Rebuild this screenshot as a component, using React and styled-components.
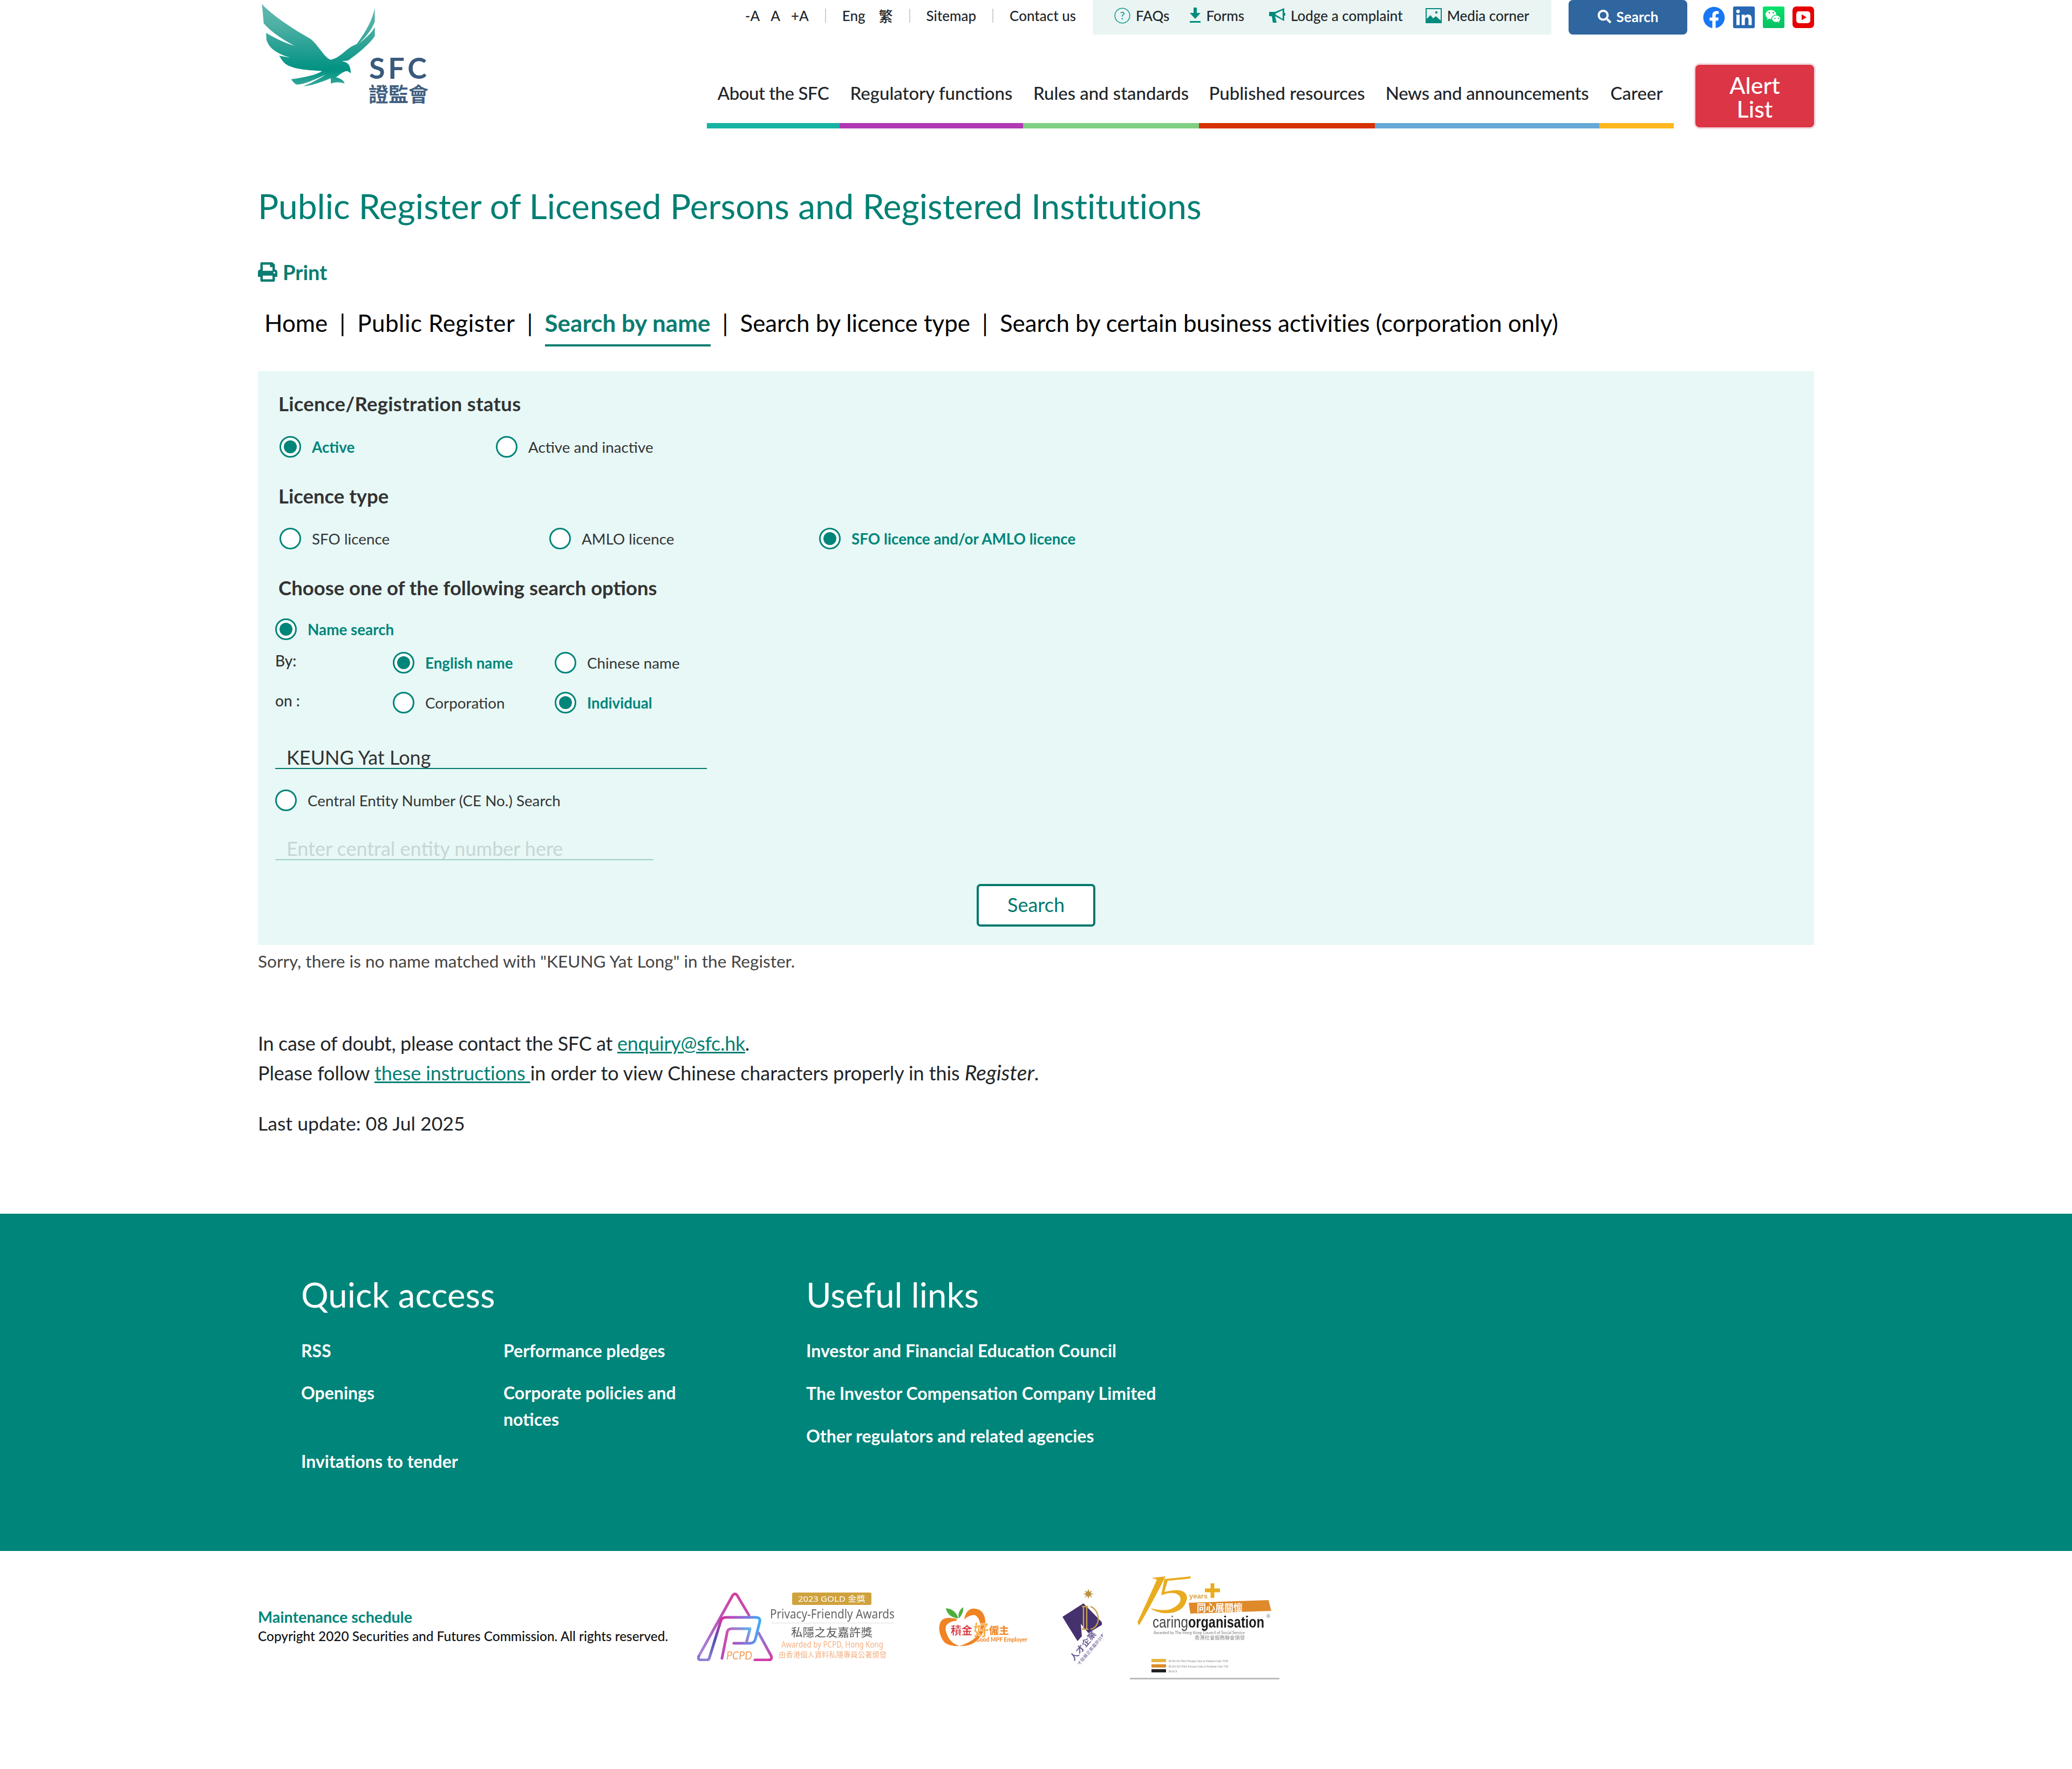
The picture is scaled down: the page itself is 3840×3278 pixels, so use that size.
import React from "react";
import styled, { createGlobalStyle } from "styled-components";
import { FaFacebook, FaLinkedin, FaPrint, FaSearch } from "react-icons/fa";

const Global = createGlobalStyle`
  html, body { margin: 0; padding: 0; background: #fff; }
  body { font-family: Lato, "Noto Sans CJK TC", sans-serif; color: #212529; }
  * { box-sizing: border-box; }
`;

const Wrap = styled.div`width: 2884px; margin: 0 auto;`;
const Header = styled.header`display: flex; justify-content: space-between; height: 238px;`;
const LogoBox = styled.a`display: block; width: 330px; height: 200px;`;
const HeadRight = styled.div`display: flex; flex-direction: column; align-items: flex-end;`;
const TopRow = styled.div`display: flex; height: 64px; align-items: flex-start;`;
const TextTools = styled.div`display: flex; align-items: center; height: 57px; font-size: 26px; font-weight: 500; color: #212529; margin-right: 31px;`;
const ToolLink = styled.a`margin-left: ${p => p.$ml || 0}px;`;
const Sep = styled.span`width: 2px; height: 26px; background: #cfcfcf; margin: 0 30px;`;
const QuickPanel = styled.div`display: flex; align-items: center; width: 850px; height: 64px; background: #eaf5f3; padding: 0 0 6px 40px; font-size: 26px; font-weight: 500;`;
const QuickLink = styled.a`display: flex; align-items: center; gap: 10px; margin-right: ${p => p.$mr || 0}px; white-space: nowrap;`;
const SearchBtn = styled.button`display: flex; align-items: center; justify-content: center; gap: 10px; width: 220px; height: 64px; margin-left: 32px; background: #2f669f; color: #fff; border: 0; border-radius: 8px; font: 700 26px Lato, sans-serif; padding: 0 0 3px;`;
const Socials = styled.div`display: flex; align-items: center; gap: 15px; margin-left: 29px; height: 64px; svg { display: block; }`;
const MainRow = styled.div`display: flex; margin-top: 54px; align-items: flex-start;`;
const Nav = styled.nav`display: flex;`;
const NavItem = styled.a`display: flex; align-items: center; justify-content: center; height: 120px; width: ${p => p.$w}px; border-bottom: 10px solid ${p => p.$c}; padding-bottom: 3px; font-size: 33px; font-weight: 500; letter-spacing: ${p => p.$ls}px; white-space: nowrap; color: #212529;`;
const AlertBtn = styled.a`display: flex; align-items: center; justify-content: center; width: 220px; height: 116px; margin: 2px 0 0 40px; padding-top: 3px; background: #dc3545; box-shadow: 0 0 0 3px #f5dade; border-radius: 8px; color: #fff; font-size: 43px; font-weight: 500; line-height: 44px; text-align: center;`;

const Title = styled.h1`margin: 104px 0 0; font-size: 64px; line-height: 80px; font-weight: 400; color: #007f73; letter-spacing: -0.03px;`;
const PrintLink = styled.a`display: flex; align-items: center; gap: 10px; margin-top: 60px; height: 44px; font-size: 38px; font-weight: 700; color: #0b7c70;`;
const Tabs = styled.div`display: flex; margin-top: 44px; padding-left: 12px; font-size: 44px; line-height: 56px; color: #000; height: 74px;`;
const Tab = styled.a`display: block; height: 72px; white-space: nowrap; letter-spacing: ${p => p.$ls || 0}px; ${p => p.$on ? "color:#0b7c70;font-weight:700;border-bottom:4px solid #0b7c70;" : ""}`;
const Bar = styled.span`display: block; margin: 0 22px;`;

const Panel = styled.section`margin-top: 44px; background: #e7f8f6; padding: 38px 32px 34px; height: 1063px;`;
const Heading = styled.h3`margin: ${p => p.$mt || 0}px 0 0 6px; font-size: 36.5px; line-height: 44px; font-weight: 700; color: #333; letter-spacing: ${p => p.$ls || 0}px;`;
const RadioRow = styled.div`display: flex; margin: ${p => p.$mt || 0}px 0 0 ${p => p.$ml ?? 8}px; height: 40px;`;
const RadioItem = styled.label`display: flex; align-items: center; width: ${p => p.$w ? p.$w + "px" : "auto"}; gap: 20px; font-size: 27.8px; font-weight: ${p => p.$on ? 700 : 400}; color: ${p => p.$on ? "#00857a" : "#333"}; white-space: nowrap;`;
const RadioDot = styled.span`display: flex; align-items: center; justify-content: center; width: 40px; height: 40px; border-radius: 50%; border: 3px solid #00857a; background: #fff; flex: none; &::after { content: ""; display: ${p => p.$on ? "block" : "none"}; width: 24px; height: 24px; border-radius: 50%; background: #00857a; }`;
const SubLabel = styled.span`display: block; width: 218px; font-size: 28px; line-height: 32px; font-weight: 500; color: #333; margin-top: ${p => p.$mt || 0}px;`;
const TextBox = styled.div`margin-top: ${p => p.$mt}px; width: ${p => p.$w}px; height: 56px; border-bottom: 2px solid ${p => p.$line}; padding: 12px 0 0 21px; font-size: 36px; line-height: 44px; font-weight: 400; color: ${p => p.$c}; white-space: nowrap;`;
const ButtonLine = styled.div`display: flex; justify-content: center; margin-top: 44px;`;
const SubmitBtn = styled.button`width: 220px; height: 79px; background: #fff; border: 4px solid #00796d; border-radius: 7px; color: #00796d; font: 400 36px Lato, sans-serif; padding: 0 0 3px;`;
const Message = styled.p`margin: 10px 0 0; font-size: 31.6px; line-height: 40px; color: #444;`;
const BodyBlock = styled.div`margin-top: 105px; font-size: 36px; line-height: 54px; color: #212529;`;
const BodyLine = styled.div`letter-spacing: ${p => p.$ls}px; white-space: nowrap;`;
const RegisterWord = styled.em`font-size: 39px; letter-spacing: 0;`;
const BodyLink = styled.a`color: #007f73; text-decoration: underline;`;
const Updated = styled.p`margin: 40px 0 140px; font-size: 35.6px; line-height: 54px;`;

const Footer = styled.footer`background: #00857a; height: 625px; color: #fff;`;
const FooterInner = styled.div`width: 2884px; margin: 0 auto; padding: 112px 0 0 80px; display: flex;`;
const FootCol = styled.div`width: ${p => p.$w}px;`;
const FootHead = styled.h2`margin: 0 0 41px; font-size: 63.5px; line-height: 76px; font-weight: 400; color: #fff;`;
const FootGrid = styled.div`display: grid; grid-template-columns: 375px 375px; row-gap: 29px; align-items: start;`;
const FootList = styled.div`display: flex; flex-direction: column; gap: 30px;`;
const FootLink = styled.a`display: block; font-size: 32px; line-height: 49px; font-weight: 700; color: #fff;`;

const Bottom = styled.div`width: 2884px; margin: 0 auto; padding: 40px 0 163px; display: flex; align-items: center;`;
const Legal = styled.div`width: 814px;`;
const LegalLink = styled.a`display: block; font-size: 28.7px; line-height: 36px; font-weight: 700; color: #00857a;`;
const Copy = styled.div`font-size: 24.4px; line-height: 36px; font-weight: 500; color: #111; white-space: nowrap;`;
const Awards = styled.div`display: flex; align-items: center; svg { display: block; filter: blur(0.7px); }`;

const Eagle = () => (
  <svg width="330" height="200" viewBox="0 0 330 200">
    <defs>
      <linearGradient id="eg" x1="0" y1="0" x2="0" y2="1">
        <stop offset="0" stopColor="#64b8af" />
        <stop offset="0.25" stopColor="#4fb0a6" />
        <stop offset="0.8" stopColor="#009282" />
        <stop offset="1" stopColor="#3aa99c" />
      </linearGradient>
    </defs>
    <g transform="translate(-18 0) scale(0.6378 0.3333)">
      <path fill="url(#eg)" d="M40 22C60 70 120 150 180 215C205 250 220 320 240 332C270 320 285 265 315 245C345 170 360 110 368 45L368 120C358 170 340 210 318 248C340 215 358 185 368 150L368 200C350 250 320 295 290 337L272 340C292 345 298 370 298 408C292 398 288 392 280 398C270 405 262 420 255 430C268 435 278 448 280 464C265 455 250 455 240 465L240 435C220 450 190 475 160 480C185 460 210 435 225 415C195 440 165 470 140 470C133 462 128 450 125 440C160 432 195 418 215 395C170 390 130 385 108 355C100 343 95 325 90 310L122 320C85 300 60 270 53 220L52 182C75 210 105 238 135 255C105 225 70 185 45 130Z" />
    </g>
    <text x="206" y="146" fill="#3a5a7c" fontFamily="Lato, sans-serif" fontWeight="700" fontSize="54" textLength="107" lengthAdjust="spacing">SFC</text>
    <text x="205" y="189" fill="#3f5f80" fontFamily="'Noto Sans CJK TC', sans-serif" fontWeight="700" fontSize="37" textLength="111" lengthAdjust="spacingAndGlyphs">證監會</text>
  </svg>
);

const QIcon = () => (
  <svg width="30" height="30" viewBox="0 0 30 30" style={{ display: "block" }}>
    <circle cx="15" cy="15" r="13.8" fill="none" stroke="#12998b" strokeWidth="1.6" />
    <text x="15" y="22" textAnchor="middle" fontSize="20" fill="#12998b" fontFamily="Lato, sans-serif">?</text>
  </svg>
);
const DownIcon = () => (
  <svg width="20" height="30" viewBox="0 0 20 30" style={{ display: "block" }}>
    <path d="M7 0h6v10h7L10 21 0 10h7z" fill="#008b7d" />
    <rect x="0" y="25" width="20" height="3" fill="#008b7d" />
  </svg>
);
const HornIcon = () => (
  <svg width="30" height="30" viewBox="0 0 30 30" style={{ display: "block" }}>
    <path d="M0 8h11L28 1v24L11 16l3 12H7L5 16H0z" fill="#008b7d" />
    <path d="M12 11l13-6v16L12 13z" fill="#eaf5f3" />
    <rect x="27" y="10" width="3" height="5" fill="#008b7d" />
  </svg>
);
const PicIcon = () => (
  <svg width="30" height="30" viewBox="0 0 30 30" style={{ display: "block" }}>
    <rect x="1" y="2" width="28" height="26" fill="#eaf5f3" stroke="#008b7d" strokeWidth="2" />
    <circle cx="20" cy="9" r="2.2" fill="#008b7d" />
    <path d="M2 27v-6l7-7 5 6 5-4 9 8v3z" fill="#008b7d" />
  </svg>
);

const Wechat = () => (
  <svg width="40" height="40" viewBox="0 0 40 40">
    <defs><linearGradient id="wc" x1="0" y1="0" x2="0" y2="1"><stop offset="0" stopColor="#05e46b" /><stop offset="1" stopColor="#07bf63" /></linearGradient></defs>
    <rect width="40" height="40" rx="3" fill="url(#wc)" />
    <g transform="translate(4 5) scale(0.052)" fill="#fff">
      <ellipse cx="210" cy="190" rx="190" ry="160" />
      <path d="M90 310l-20 70 80-40z" />
      <ellipse cx="400" cy="340" rx="160" ry="130" stroke="#07c864" strokeWidth="26" />
      <path d="M470 450l40 50-10-70z" />
    </g>
    <circle cx="12" cy="11.5" r="1.5" fill="#07c864" /><circle cx="19.5" cy="11.5" r="1.5" fill="#07c864" />
    <circle cx="22.5" cy="22" r="1.2" fill="#07c864" /><circle cx="29" cy="22" r="1.2" fill="#07c864" />
  </svg>
);
const Youtube = () => (
  <svg width="40" height="40" viewBox="0 0 40 40">
    <rect width="40" height="40" rx="7" fill="#e60000" />
    <rect x="7" y="9" width="26" height="22" rx="5" fill="#fff" />
    <path d="M17 14.5l9 5.5-9 5.5z" fill="#e60000" />
  </svg>
);

const Pcpd = () => (
  <svg width="366" height="127" viewBox="0 0 366 127">
    <defs>
      <linearGradient id="pa" x1="0" y1="0" x2="0" y2="1"><stop offset="0" stopColor="#d2409f" /><stop offset="0.55" stopColor="#b05ec0" /><stop offset="1" stopColor="#a78ade" /></linearGradient>
      <linearGradient id="pb" x1="0" y1="0" x2="0" y2="1"><stop offset="0" stopColor="#c03aa8" /><stop offset="0.5" stopColor="#4a50b2" /><stop offset="1" stopColor="#8f7fd8" /></linearGradient>
      <linearGradient id="pc" x1="0" y1="0" x2="1" y2="0"><stop offset="0" stopColor="#d62c9f" /><stop offset="0.6" stopColor="#8a70d8" /><stop offset="1" stopColor="#3fa9f5" /></linearGradient>
      <linearGradient id="pd" x1="0" y1="1" x2="1" y2="0"><stop offset="0" stopColor="#b04bc0" /><stop offset="0.5" stopColor="#d64aa8" /><stop offset="1" stopColor="#5ab2ee" /></linearGradient>
      <linearGradient id="pe" x1="0" y1="0" x2="0" y2="1"><stop offset="0" stopColor="#8a80d8" /><stop offset="1" stopColor="#d238a8" /></linearGradient>
    </defs>
    <g fill="none" strokeWidth="5" strokeLinecap="round" strokeLinejoin="round">
      <path d="M3 118L66 5Q70 0 74 5L96 42" stroke="url(#pa)" />
      <path d="M3 118Q0 125 8 125H18Q22 125 23 120L44 52" stroke="url(#pb)" />
      <path d="M44 52Q46 46 54 46H108Q118 46 116 54L108 86Q106 94 98 94H68" stroke="url(#pc)" />
      <path d="M46 122L56 72Q58 67 64 67H98L92 90" stroke="url(#pd)" />
      <path d="M114 75L137 117Q140 125 132 125H107" stroke="url(#pe)" />
    </g>
    <text x="54" y="124" fontFamily="Lato, sans-serif" fontStyle="italic" fontSize="22" fill="#f39a55" textLength="48" lengthAdjust="spacingAndGlyphs">PCPD</text>
    <rect x="176" y="0" width="147" height="23" rx="3" fill="#cfa23d" />
    <text x="187" y="17" fontFamily="'Noto Sans', 'Noto Sans CJK TC', sans-serif" fontSize="15" fill="#fff" textLength="125" lengthAdjust="spacingAndGlyphs">2023 GOLD 金獎</text>
    <text x="135" y="48" fontFamily="'Noto Sans', sans-serif" fontSize="23" fill="#666" textLength="231" lengthAdjust="spacingAndGlyphs">Privacy-Friendly Awards</text>
    <rect x="137" y="56" width="228" height="1" fill="#ddd" />
    <text x="174" y="81" fontFamily="'Noto Sans CJK TC', sans-serif" fontSize="21" fill="#555" textLength="151" lengthAdjust="spacingAndGlyphs">私隱之友嘉許獎</text>
    <text x="156" y="102" fontFamily="'Noto Sans', sans-serif" fontSize="15.5" fill="#f4b184" textLength="189" lengthAdjust="spacingAndGlyphs">Awarded by PCPD, Hong Kong</text>
    <text x="151" y="120" fontFamily="'Noto Sans CJK TC', sans-serif" fontSize="13.3" fill="#f4b184" textLength="200" lengthAdjust="spacingAndGlyphs">由香港個人資料私隱專員公署頒發</text>
  </svg>
);

const Mpf = () => (
  <svg width="165" height="72" viewBox="0 0 165 72" style={{ marginLeft: 81 }}>
    <path d="M14 2C26 3 34 10 37 21C26 20 16 14 14 2z" fill="#4caf3a" />
    <path d="M46 0C47 8 43 16 38 21C36 13 39 5 46 0z" fill="#4caf3a" />
    <path d="M34 22C22 19 10 19 5 26C-1 36 1 52 11 65C18 71 30 73 39 72C31 69 26 66 23 62C16 54 12 42 14 36C16 29 26 26 34 25z" fill="#f08323" />
    <path d="M48 23C50 12 54 5 62 3C72 2 80 6 83 12C88 20 88 32 85 42C80 54 70 66 58 70C51 72 45 72 39 72C49 69 60 64 67 58C74 50 79 42 78 34C77 25 74 18 68 15C60 14 54 18 48 23z" fill="#f08323" />
    <text x="23" y="51" fontFamily="'Noto Sans CJK TC', sans-serif" fontWeight="700" fontSize="20" fill="#d22a35" stroke="#fff" strokeWidth="0.3">積金</text>
    <text x="65" y="54" fontFamily="'Noto Sans CJK TC', sans-serif" fontWeight="700" fontSize="29" fill="#f9b04a" stroke="#fff" strokeWidth="0.5">好</text>
    <text x="94" y="50" fontFamily="'Noto Sans CJK TC', sans-serif" fontWeight="700" fontSize="18.500" fill="#f08323">僱主</text>
    <text x="69" y="64" fontFamily="Lato, sans-serif" fontWeight="700" fontSize="11" fill="#f08323" textLength="96" lengthAdjust="spacingAndGlyphs">Good MPF Employer</text>
  </svg>
);

const MdLogo = () => (
  <svg width="75" height="140" viewBox="0 0 75 140" style={{ marginLeft: 65 }}>
    <path d="M48 0l2 6 5-3-3 5 6 2-6 1 3 6-5-4-2 6-2-6-5 4 3-6-6-1 6-2-3-5 5 3z" fill="#b9913f" />
    <path d="M0 52L39 27 73 62V67L48 82 34 65 36 88 28 97 11 70z" fill="#46316f" />
    <path d="M36 33h12M36 75h12M39 33v42M45 33v42M52 33c18 6 20 38 0 42" fill="none" stroke="#c9a24e" strokeWidth="2.4" />
    <g transform="rotate(-50 40 106)" fill="#6a5a96">
      <text x="6" y="110" fontFamily="'Noto Sans CJK TC', sans-serif" fontWeight="700" fontSize="15" textLength="66" lengthAdjust="spacingAndGlyphs">人才企業</text>
      <text x="-2" y="123" fontFamily="'Noto Sans CJK TC', sans-serif" fontSize="8" textLength="84" lengthAdjust="spacingAndGlyphs">人才發展企業嘉許計劃</text>
    </g>
  </svg>
);

const Caring = () => (
  <svg width="277" height="200" viewBox="0 0 277 200" style={{ marginLeft: 50 }}>
    <path d="M40 10L66 7Q45 50 17 98L14 92Q36 45 50 13z" fill="#e9ac1f" />
    <path d="M64 12L113 7L112 11Q85 14 70 15L64 36Q105 25 106 48Q100 78 60 75Q45 72 38 66Q60 72 75 68Q98 58 93 45Q85 32 58 42z" fill="#e9ac1f" />
    <text x="110" y="48" fontFamily="'Liberation Sans', sans-serif" fontWeight="700" fontSize="13" fill="#d9a24a">years</text>
    <path d="M139 33h28M153 20v27" stroke="#e9ac1f" strokeWidth="7" />
    <path d="M109 56l148-5 5 20-150 5z" fill="#de8a2b" />
    <text x="124" y="72" fontFamily="'Noto Sans CJK TC', sans-serif" fontWeight="700" fontSize="18" fill="#fff" textLength="85" lengthAdjust="spacingAndGlyphs">同心展關懷</text>
    <text x="253" y="84" fontFamily="Lato, sans-serif" fontSize="9" fill="#777">®</text>
    <text x="42" y="102" fontFamily="'Liberation Sans', sans-serif" fontSize="29" fill="#444" textLength="66" lengthAdjust="spacingAndGlyphs">caring</text>
    <text x="108" y="102" fontFamily="'Liberation Sans', sans-serif" fontSize="29" fontWeight="700" fill="#1b1b1b" textLength="141" lengthAdjust="spacingAndGlyphs">organisation</text>
    <text x="44" y="114" fontFamily="Lato, sans-serif" fontSize="8" fill="#777" textLength="169" lengthAdjust="spacingAndGlyphs">Awarded by The Hong Kong Council of Social Service</text>
    <text x="120" y="124" fontFamily="'Noto Sans CJK TC', sans-serif" fontSize="9" fill="#888" textLength="93" lengthAdjust="spacingAndGlyphs">香港社會服務聯會頒發</text>
    <rect x="40" y="160" width="27" height="6" fill="#e5b53c" />
    <rect x="40" y="170" width="27" height="6" fill="#dd8c26" />
    <rect x="40" y="179" width="27" height="6" fill="#222" />
    <text x="72" y="166" fontFamily="Lato, sans-serif" fontSize="5" fill="#888" textLength="110" lengthAdjust="spacingAndGlyphs">BS EN ISO 9001 Process Color or Pantone Color 7578</text>
    <text x="72" y="176" fontFamily="Lato, sans-serif" fontSize="5" fill="#888" textLength="110" lengthAdjust="spacingAndGlyphs">BS EN ISO 9001 Process Color or Pantone Color 718</text>
    <text x="72" y="185" fontFamily="Lato, sans-serif" fontSize="5" fill="#888">BLACK</text>
    <rect x="0" y="195" width="277" height="3" fill="#bbb" />
  </svg>
);

const Radio = ({ on, w, children }) => (
  <RadioItem $on={on} $w={w}><RadioDot $on={on} />{children}</RadioItem>
);

const navItems = [
  ["About the SFC", 246, "#16b3a3", -0.5],
  ["Regulatory functions", 340, "#b038b2", 0],
  ["Rules and standards", 326, "#7fd083", -0.05],
  ["Published resources", 326, "#d63200", 0],
  ["News and announcements", 416, "#65a9d6", -0.33],
  ["Career", 138, "#ffb71f", 0],
];

export default function App() {
  return (
    <>
      <Global />
      <Wrap>
        <Header>
          <LogoBox><Eagle /></LogoBox>
          <HeadRight>
            <TopRow>
              <TextTools>
                <ToolLink>-A</ToolLink><ToolLink $ml={20}>A</ToolLink><ToolLink $ml={20}>+A</ToolLink>
                <Sep />
                <ToolLink>Eng</ToolLink><ToolLink $ml={25}>繁</ToolLink>
                <Sep />
                <ToolLink>Sitemap</ToolLink>
                <Sep />
                <ToolLink>Contact us</ToolLink>
              </TextTools>
              <QuickPanel>
                <QuickLink $mr={38}><QIcon />FAQs</QuickLink>
                <QuickLink $mr={46}><DownIcon />Forms</QuickLink>
                <QuickLink $mr={42}><HornIcon />Lodge a complaint</QuickLink>
                <QuickLink><PicIcon />Media corner</QuickLink>
              </QuickPanel>
              <SearchBtn><FaSearch size={25} />Search</SearchBtn>
              <Socials>
                <FaFacebook size={41} color="#1877f2" />
                <FaLinkedin size={46} color="#2867b2" style={{ margin: "0 -3px" }} />
                <Wechat />
                <Youtube />
              </Socials>
            </TopRow>
            <MainRow>
              <Nav>
                {navItems.map(([t, w, c, ls]) => <NavItem key={t} $w={w} $c={c} $ls={ls}>{t}</NavItem>)}
              </Nav>
              <AlertBtn>Alert<br />List</AlertBtn>
            </MainRow>
          </HeadRight>
        </Header>

        <Title>Public Register of Licensed Persons and Registered Institutions</Title>
        <PrintLink><FaPrint size={36} />Print</PrintLink>
        <Tabs>
          <Tab>Home</Tab><Bar>|</Bar>
          <Tab $ls={0.45}>Public Register</Tab><Bar>|</Bar>
          <Tab $on>Search by name</Tab><Bar>|</Bar>
          <Tab $ls={-0.1}>Search by licence type</Tab><Bar>|</Bar>
          <Tab $ls={-0.08}>Search by certain business activities (corporation only)</Tab>
        </Tabs>

        <Panel>
          <Heading $ls={0.27}>Licence/Registration status</Heading>
          <RadioRow $mt={38}>
            <Radio on w={401}>Active</Radio>
            <Radio>Active and inactive</Radio>
          </RadioRow>
          <Heading $mt={49}>Licence type</Heading>
          <RadioRow $mt={37}>
            <Radio w={500}>SFO licence</Radio>
            <Radio w={500}>AMLO licence</Radio>
            <Radio on>SFO licence and/or AMLO licence</Radio>
          </RadioRow>
          <Heading $mt={49}>Choose one of the following search options</Heading>
          <RadioRow $mt={35} $ml={0}><Radio on>Name search</Radio></RadioRow>
          <RadioRow $mt={22} $ml={0}>
            <SubLabel>By:</SubLabel>
            <Radio on w={300}>English name</Radio>
            <Radio>Chinese name</Radio>
          </RadioRow>
          <RadioRow $mt={34} $ml={0}>
            <SubLabel>on :</SubLabel>
            <Radio w={300}>Corporation</Radio>
            <Radio on>Individual</Radio>
          </RadioRow>
          <TextBox $mt={47} $w={800} $line="#00796d" $c="#333">KEUNG Yat Long</TextBox>
          <RadioRow $mt={38} $ml={0}><Radio>Central Entity Number (CE No.) Search</Radio></RadioRow>
          <TextBox $mt={35} $w={701} $line="#9fd0c9" $c="#c6d6d4">Enter central entity number here</TextBox>
          <ButtonLine><SubmitBtn>Search</SubmitBtn></ButtonLine>
        </Panel>

        <Message>Sorry, there is no name matched with "KEUNG Yat Long" in the Register.</Message>
        <BodyBlock>
          <BodyLine $ls={-0.33}>In case of doubt, please contact the SFC at <BodyLink>enquiry@sfc.hk</BodyLink>.</BodyLine>
          <BodyLine $ls={-0.08}>Please follow <BodyLink>these instructions </BodyLink>in order to view Chinese characters properly in this <RegisterWord>Register</RegisterWord>.</BodyLine>
        </BodyBlock>
        <Updated>Last update: 08 Jul 2025</Updated>
      </Wrap>

      <Footer>
        <FooterInner>
          <FootCol $w={936}>
            <FootHead>Quick access</FootHead>
            <FootGrid>
              <FootLink>RSS</FootLink><FootLink>Performance pledges</FootLink>
              <FootLink>Openings</FootLink><FootLink>Corporate policies and notices</FootLink>
              <FootLink>Invitations to tender</FootLink>
            </FootGrid>
          </FootCol>
          <FootCol $w={900}>
            <FootHead>Useful links</FootHead>
            <FootList>
              <FootLink>Investor and Financial Education Council</FootLink>
              <FootLink>The Investor Compensation Company Limited</FootLink>
              <FootLink>Other regulators and related agencies</FootLink>
            </FootList>
          </FootCol>
        </FooterInner>
      </Footer>

      <Bottom>
        <Legal>
          <LegalLink>Maintenance schedule</LegalLink>
          <Copy>Copyright 2020 Securities and Futures Commission. All rights reserved.</Copy>
        </Legal>
        <Awards>
          <Pcpd /><Mpf /><MdLogo /><Caring />
        </Awards>
      </Bottom>
    </>
  );
}
